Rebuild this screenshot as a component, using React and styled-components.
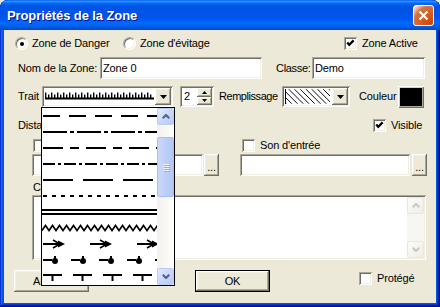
import React from 'react';
import styled, { createGlobalStyle, css } from 'styled-components';

const GlobalStyle = createGlobalStyle`
  html, body { margin: 0; padding: 0; background: #ece9d8; }
  body { font-family: "Liberation Sans", Arial, sans-serif; font-size: 11px; color: #000; letter-spacing: -0.15px; }
  #root { width: 440px; height: 307px; }
`;

const sunken = css`
  box-shadow: inset 1px 1px #aca899, inset -1px -1px #ffffff, inset 2px 2px #716f64, inset -2px -2px #f1efe2;
`;
const raised = css`
  box-shadow: inset -1px -1px #716f64, inset 1px 1px #ffffff, inset -2px -2px #aca899, inset 2px 2px #f1efe2;
`;

const Window = styled.div`
  width: 440px;
  height: 307px;
  box-sizing: border-box;
  display: flex;
  flex-direction: column;
  background: #0054e3;
  border-radius: 8px 8px 0 0;
  overflow: hidden;
  box-shadow: inset -1px -1px #00138c, inset 1px 1px #0831d9, inset -2px -2px #001ea0,
    inset 2px 2px #166aee, inset -3px -3px #003bda, inset 3px 3px #0855dd;
`;

const TitleBar = styled.div`
  height: 30px;
  flex: none;
  display: flex;
  align-items: center;
  padding: 0 6px 0 7px;
  box-sizing: border-box;
  border-radius: 8px 8px 0 0;
  background: linear-gradient(180deg, #0058ee 0%, #3593ff 4%, #288eff 6%, #127dff 8%, #036ffc 10%,
    #0262ee 14%, #0057e5 20%, #0054e3 24%, #0055eb 56%, #005bf5 66%, #026afe 76%, #0062ef 86%,
    #0052d6 94%, #0049cc 100%);
`;

const Title = styled.span`
  color: #fff;
  font-weight: bold;
  font-size: 13px;
  letter-spacing: -0.1px;
  text-shadow: 1px 1px #0f1089;
  padding-top: 1px;
`;

const CloseBtn = styled.div`
  margin-left: auto;
  width: 21px;
  height: 21px;
  box-sizing: border-box;
  border: 1px solid #fff;
  border-radius: 3px;
  background: radial-gradient(circle at 90% 90%, #cc4600 0%, #dc6527 55%, #cd7546 70%, #ffccb2 90%, #fff 100%);
  display: flex;
  align-items: center;
  justify-content: center;
`;

const Client = styled.div`
  flex: 1;
  margin: 0 4px 4px;
  background: #ece9d8;
  display: flex;
  flex-direction: column;
`;

const Row = styled.div`
  display: flex;
  align-items: center;
  height: ${p => p.$h}px;
  margin-top: ${p => p.$mt}px;
  flex: none;
`;

const Label = styled.span`
  flex: none;
  width: ${p => (p.$w ? `${p.$w}px` : 'auto')};
  margin-left: ${p => p.$ml || 0}px;
  white-space: nowrap;
  line-height: 13px;
  ${p => p.$ls != null && css`letter-spacing: ${p.$ls}px;`}
`;

const Choice = styled.div`
  flex: none;
  display: flex;
  align-items: center;
  gap: ${p => p.$gap ?? 4}px;
  width: ${p => (p.$w ? `${p.$w}px` : 'auto')};
  margin-left: ${p => p.$ml || 0}px;
  white-space: nowrap;
  line-height: 13px;
  ${p => p.$mt != null && css`align-self: flex-start; margin-top: ${p.$mt}px;`}
`;

const RadioCircle = styled.span`
  width: 13px;
  height: 13px;
  box-sizing: border-box;
  border-radius: 50%;
  border: 1px solid;
  border-color: #aca899 #ffffff #ffffff #aca899;
  box-shadow: inset 1px 1px #716f64, inset -1px -1px #f1efe2;
  background: #fff;
  display: flex;
  align-items: center;
  justify-content: center;
  flex: none;
  &::after {
    content: '';
    width: 4px;
    height: 4px;
    border-radius: 50%;
    background: ${p => (p.$checked ? '#000' : 'transparent')};
  }
`;

const CheckBox = styled.span`
  width: 13px;
  height: 13px;
  box-sizing: border-box;
  ${sunken};
  background: #fff;
  display: flex;
  align-items: center;
  justify-content: center;
  flex: none;
`;

const Check = ({ checked }) => (
  <CheckBox>
    {checked && (
      <svg width="13" height="13" viewBox="0 0 13 13">
        <polyline points="3.2,5.6 5.2,7.8 9.6,3.4" fill="none" stroke="#000" strokeWidth="2.2" />
      </svg>
    )}
  </CheckBox>
);

const TextBox = styled.div`
  flex: none;
  width: ${p => p.$w}px;
  height: 22px;
  margin-left: ${p => p.$ml || 0}px;
  box-sizing: border-box;
  background: #fff;
  ${sunken};
  padding: 0 3px;
  display: flex;
  align-items: center;
  white-space: nowrap;
`;

const SmallButton = styled.div`
  flex: none;
  width: 15px;
  height: 22px;
  margin-left: ${p => p.$ml || 0}px;
  box-sizing: border-box;
  background: #ece9d8;
  ${raised};
  display: flex;
  align-items: center;
  justify-content: center;
  padding-top: 3px;
  font-size: 11px;
`;

const Combo = styled.div`
  position: relative;
  flex: none;
  width: ${p => p.$w}px;
  height: 21px;
  box-sizing: border-box;
  background: #fff;
  ${sunken};
  padding: 2px;
  display: flex;
`;

const ComboField = styled.div`
  flex: 1;
  display: flex;
  align-items: center;
  overflow: hidden;
`;

const DropButton = styled.div`
  width: 16px;
  height: 17px;
  flex: none;
  box-sizing: border-box;
  background: #ece9d8;
  ${raised};
  display: flex;
  align-items: center;
  justify-content: center;
`;

const DropArrow = () => (
  <svg width="7" height="4" viewBox="0 0 7 4">
    <polygon points="0,0 7,0 3.5,4" fill="#000" />
  </svg>
);

const DropList = styled.div`
  position: absolute;
  left: -1px;
  top: 21px;
  width: 134px;
  height: 179px;
  box-sizing: border-box;
  border: 1px solid #000;
  background: #fff;
  display: flex;
  z-index: 10;
`;

const Items = styled.div`
  flex: 1;
  display: flex;
  flex-direction: column;
  overflow: hidden;
`;

const Item = styled.div`
  height: 16px;
  flex: none;
`;

const VScroll = styled.div`
  width: 17px;
  flex: none;
  display: flex;
  flex-direction: column;
  background: ${p => (p.$disabled ? '#f7f6f2' : 'linear-gradient(90deg, #f3f1ec, #fefefb)')};
`;

const ScrollBtn = styled.div`
  width: 17px;
  height: 17px;
  flex: none;
  box-sizing: border-box;
  border-radius: 2px;
  border: 1px solid ${p => (p.$disabled ? '#e9e7de' : '#bacdf7')};
  background: ${p =>
    p.$disabled
      ? 'linear-gradient(135deg, #fbfbf9, #efede5)'
      : 'linear-gradient(135deg, #e4ecfe 0%, #c8d7fc 50%, #b6caf7 100%)'};
  display: flex;
  align-items: center;
  justify-content: center;
  margin-top: ${p => (p.$bottom ? 'auto' : '0')};
`;

const Thumb = styled.div`
  margin-top: ${p => p.$top}px;
  height: ${p => p.$h}px;
  box-sizing: border-box;
  border-radius: 2px;
  border: 1px solid #a8bdf3;
  background: linear-gradient(90deg, #cbd9fd, #bdcefa 50%, #b3c7f6);
  display: flex;
  flex-direction: column;
  align-items: center;
  justify-content: center;
  gap: 1px;
`;

const Grip = styled.span`
  width: 6px;
  height: 1px;
  background: #eef4fe;
  box-shadow: 1px 1px #8cb0f8;
`;

const Chevron = ({ up, color }) => (
  <svg width="8" height="5" viewBox="0 0 8 5">
    <polyline
      points={up ? '0.8,4.2 4,1 7.2,4.2' : '0.8,0.8 4,4 7.2,0.8'}
      fill="none"
      stroke={color}
      strokeWidth="2"
    />
  </svg>
);

const Spinner = styled.div`
  flex: none;
  width: 34px;
  height: 21px;
  margin-left: 7px;
  box-sizing: border-box;
  background: #fff;
  ${sunken};
  padding: 2px;
  display: flex;
`;

const SpinText = styled.span`
  flex: 1;
  padding-left: 2px;
  line-height: 17px;
`;

const SpinButtons = styled.div`
  width: 15px;
  display: flex;
  flex-direction: column;
`;

const SpinButton = styled.div`
  flex: 1;
  box-sizing: border-box;
  background: #ece9d8;
  ${raised};
  display: flex;
  align-items: center;
  justify-content: center;
`;

const Swatch = styled.div`
  flex: none;
  width: 26px;
  height: 22px;
  box-sizing: border-box;
  background: #000;
  box-shadow: inset 1px 1px #ffffff, inset -1px -1px #716f64, inset 2px 2px #d4d0c8, inset -2px -2px #aca899;
`;

const Memo = styled.div`
  flex: none;
  margin: ${p => p.$mt}px 0 0 ${p => p.$ml}px;
  width: ${p => p.$w}px;
  height: ${p => p.$h}px;
  box-sizing: border-box;
  background: #fff;
  ${sunken};
  padding: 2px;
  display: flex;
`;

const MemoText = styled.div`
  flex: 1;
`;

const Button = styled.div`
  flex: none;
  width: ${p => p.$w}px;
  height: 22px;
  margin-left: ${p => p.$ml || 0}px;
  box-sizing: border-box;
  background: #ece9d8;
  display: flex;
  align-items: center;
  justify-content: center;
  ${p =>
    p.$default
      ? css`
          border: 1px solid #000;
          ${raised};
        `
      : raised};
`;

const dashLine = (dash, y = 8) => (
  <line x1="1" x2="115" y1={y} y2={y} stroke="#000" strokeWidth="2" strokeDasharray={dash} />
);

const range = (start, end, step) => {
  const out = [];
  for (let x = start; x < end; x += step) out.push(x);
  return out;
};

const patterns = [
  () => dashLine('17 9'),
  () => dashLine('24 3 4 3'),
  () => dashLine('20 7 9 7'),
  () => dashLine('12 3 3 3'),
  () => dashLine('30 10'),
  () => dashLine('4 5'),
  () => (
    <g>
      <line x1="0" x2="115" y1="6" y2="6" stroke="#000" strokeWidth="2" />
      <line x1="0" x2="115" y1="10" y2="10" stroke="#000" strokeWidth="2" />
    </g>
  ),
  () => (
    <polyline
      points={range(0, 120, 3.5).map((x, i) => `${x},${i % 2 ? 5.5 : 10.5}`).join(' ')}
      fill="none"
      stroke="#000"
      strokeWidth="1.6"
    />
  ),
  () => (
    <g>
      {range(1, 115, 47).map(x => (
        <g key={x}>
          <line x1={x} x2={x + 19} y1="8" y2="8" stroke="#000" strokeWidth="2" />
          <polyline points={`${x + 10},4 ${x + 17},8 ${x + 10},12`} fill="none" stroke="#000" strokeWidth="1.6" />
          <polygon points={`${x + 15},4.5 ${x + 22},8 ${x + 15},11.5`} fill="#000" />
        </g>
      ))}
    </g>
  ),
  () => (
    <g>
      {range(1, 115, 28).map(x => (
        <g key={x}>
          <line x1={x} x2={x + 9} y1="8" y2="8" stroke="#000" strokeWidth="2" />
          <line x1={x + 12} x2={x + 12} y1="4" y2="8" stroke="#000" strokeWidth="2" />
          <circle cx={x + 12} cy="9" r="3" fill="#000" />
        </g>
      ))}
    </g>
  ),
  () => (
    <g>
      {range(1, 115, 30).map(x => (
        <g key={x}>
          <line x1={x} x2={x + 19} y1="7" y2="7" stroke="#000" strokeWidth="2" />
          <line x1={x + 9.5} x2={x + 9.5} y1="7" y2="13" stroke="#000" strokeWidth="2" />
        </g>
      ))}
    </g>
  ),
];

const TraitPattern = () => (
  <svg width="111" height="17" viewBox="0 0 111 17">
    <rect x="1" y="9.5" width="109" height="2" fill="#000" />
    {range(1, 109, 3).map((x, i) => (
      <rect key={x} x={x} y={i % 2 ? 6.5 : 4.5} width="1.4" height={i % 2 ? 4 : 6} fill="#000" />
    ))}
  </svg>
);

const Hatch = () => (
  <svg width="46" height="15" viewBox="0 0 46 15">
    {range(-15, 46, 6).map(x => (
      <line key={x} x1={x} y1="0" x2={x + 15} y2="15" stroke="#000" strokeWidth="1" />
    ))}
  </svg>
);

const HatchBox = styled.div`
  flex: 1;
  margin: 1px 2px 1px 1px;
  border-left: 1px solid #000;
  overflow: hidden;
  display: flex;
`;

export default function App() {
  return (
    <>
      <GlobalStyle />
      <Window>
        <TitleBar>
          <Title>Propriétés de la Zone</Title>
          <CloseBtn>
            <svg width="11" height="11" viewBox="0 0 11 11">
              <path d="M1.5 1.5 L9.5 9.5 M9.5 1.5 L1.5 9.5" stroke="#fff" strokeWidth="2.2" />
            </svg>
          </CloseBtn>
        </TitleBar>
        <Client>
          <Row $mt={7} $h={13}>
            <Choice $ml={11} $w={108}>
              <RadioCircle $checked />
              Zone de Danger
            </Choice>
            <Choice $w={221}>
              <RadioCircle />
              Zone d'évitage
            </Choice>
            <Choice $gap={5}>
              <Check checked />
              Zone Active
            </Choice>
          </Row>

          <Row $mt={7} $h={22}>
            <Label $ml={14} $w={82}>Nom de la Zone:</Label>
            <TextBox $w={162}>Zone 0</TextBox>
            <Label $ml={14} $w={36} $ls={-0.3}>Classe:</Label>
            <TextBox $w={113}>Demo</TextBox>
          </Row>

          <Row $mt={7} $h={21}>
            <Label $ml={14} $w={24}>Trait</Label>
            <Combo $w={131}>
              <ComboField>
                <TraitPattern />
              </ComboField>
              <DropButton>
                <DropArrow />
              </DropButton>
              <DropList>
                <Items>
                  {patterns.map((p, i) => (
                    <Item key={i}>
                      <svg width="115" height="16" viewBox="0 0 115 16">
                        {p()}
                      </svg>
                    </Item>
                  ))}
                </Items>
                <VScroll>
                  <ScrollBtn>
                    <Chevron up color="#4d6185" />
                  </ScrollBtn>
                  <Thumb $top={12} $h={60}>
                    <Grip />
                    <Grip />
                    <Grip />
                    <Grip />
                  </Thumb>
                  <ScrollBtn $bottom>
                    <Chevron color="#4d6185" />
                  </ScrollBtn>
                </VScroll>
              </DropList>
            </Combo>
            <Spinner>
              <SpinText>2</SpinText>
              <SpinButtons>
                <SpinButton>
                  <svg width="5" height="3" viewBox="0 0 5 3">
                    <polygon points="0,3 5,3 2.5,0" fill="#000" />
                  </svg>
                </SpinButton>
                <SpinButton>
                  <svg width="5" height="3" viewBox="0 0 5 3">
                    <polygon points="0,0 5,0 2.5,3" fill="#000" />
                  </svg>
                </SpinButton>
              </SpinButtons>
            </Spinner>
            <Label $ml={5} $w={63} $ls={-0.45}>Remplissage</Label>
            <Combo $w={68}>
              <HatchBox>
                <Hatch />
              </HatchBox>
              <DropButton>
                <DropArrow />
              </DropButton>
            </Combo>
            <Label $ml={9} $w={39}>Couleur</Label>
            <Swatch />
          </Row>

          <Row $mt={12} $h={13}>
            <Label $ml={14} $w={355}>Distance:</Label>
            <Choice $gap={5}>
              <Check checked />
              Visible
            </Choice>
          </Row>

          <Row $mt={7} $h={13}>
            <Choice $ml={29} $w={209} $gap={5}>
              <Check />
              Son de sortie
            </Choice>
            <Choice $gap={5}>
              <Check />
              Son d'entrée
            </Choice>
          </Row>

          <Row $mt={2} $h={22}>
            <TextBox $ml={28} $w={171} />
            <SmallButton $ml={1}>...</SmallButton>
            <TextBox $ml={21} $w={170} />
            <SmallButton $ml={2}>...</SmallButton>
          </Row>

          <Row $mt={5} $h={13}>
            <Label $ml={29}>Commentaire:</Label>
          </Row>

          <Memo $mt={1} $ml={28} $w={394} $h={65}>
            <MemoText />
            <VScroll $disabled>
              <ScrollBtn $disabled>
                <Chevron up color="#c9c7ba" />
              </ScrollBtn>
              <ScrollBtn $disabled $bottom>
                <Chevron color="#c9c7ba" />
              </ScrollBtn>
            </VScroll>
          </Memo>

          <Row $mt={10} $h={22}>
            <Button $ml={10} $w={75}>Annuler</Button>
            <Button $ml={106} $w={75} $default>OK</Button>
            <Choice $ml={89} $mt={2} $gap={5}>
              <Check />
              Protégé
            </Choice>
          </Row>
        </Client>
      </Window>
    </>
  );
}
